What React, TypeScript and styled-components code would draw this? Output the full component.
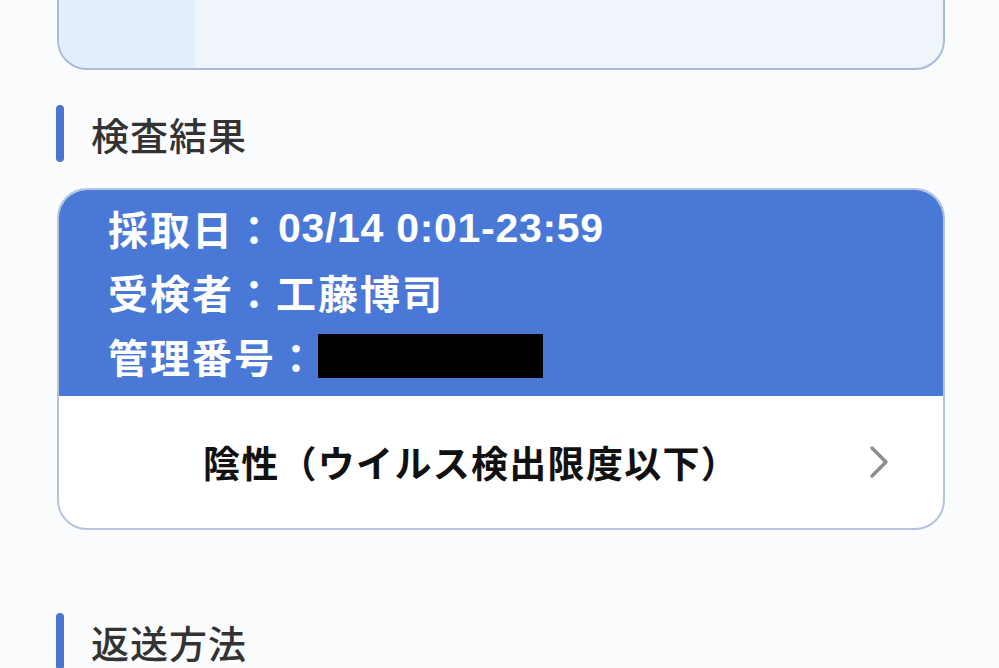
import React from 'react';
import styled, { createGlobalStyle } from 'styled-components';

const GlobalStyle = createGlobalStyle`
  html, body {
    margin: 0;
    padding: 0;
    background: #fbfcfd;
    overflow: hidden;
  }
  body {
    font-family: "Noto Sans CJK JP", "Noto Sans", sans-serif;
  }
`;

const Page = styled.div`
  width: 999px;
  height: 668px;
  overflow: hidden;
  padding: 0 54px 0 57px;
  box-sizing: border-box;
`;

const TopCard = styled.div`
  display: flex;
  height: 142px;
  margin-top: -72px;
  border: 2px solid #a9bad5;
  border-radius: 30px;
  overflow: hidden;
  background: #f0f5fc;
  box-sizing: border-box;
`;

const TopCardSide = styled.div`
  width: 136px;
  background: #e3eefb;
`;

const SectionHeading = styled.h2<{ $top: number }>`
  display: flex;
  align-items: center;
  gap: 27px;
  margin: ${(p) => p.$top}px 0 0 -1px;
  height: 57px;
  font-size: 38px;
  font-weight: 500;
  color: #333;
  letter-spacing: 1px;

  &::before {
    content: '';
    display: block;
    width: 8px;
    height: 57px;
    border-radius: 4px;
    background: #4a76cf;
  }
`;

const ResultCard = styled.div`
  margin-top: 26px;
  border: 2px solid #b4c4de;
  border-radius: 30px;
  overflow: hidden;
  background: #fff;
`;

const ResultHeader = styled.div`
  background: #4a78d7;
  padding: 6px 0 8px 49px;
  color: #fff;
  font-weight: 700;
`;

const InfoLine = styled.div`
  display: flex;
  align-items: center;
  height: 64px;
  font-size: 40px;
`;

const Jp = styled.span`
  letter-spacing: 2px;
`;

const Num = styled.span`
  font-family: "Liberation Sans", Arial, sans-serif;
  font-size: 41px;
  letter-spacing: 0.7px;
  margin-left: 2px;
`;

const Redacted = styled.span`
  display: inline-block;
  width: 225px;
  height: 44px;
  background: #000;
`;

const ResultRow = styled.div`
  display: flex;
  align-items: center;
  height: 132px;
  padding: 0 52px 0 0;
`;

const ResultText = styled.div`
  flex: 1;
  text-align: center;
  font-size: 37px;
  font-weight: 700;
  letter-spacing: 1.3px;
  color: #111;
  padding-left: 14px;
`;

const Chevron = styled.svg`
  width: 22px;
  height: 34px;
  flex-shrink: 0;
`;

export default function App() {
  return (
    <>
      <GlobalStyle />
      <Page>
        <TopCard>
          <TopCardSide />
        </TopCard>

        <SectionHeading $top={35}>検査結果</SectionHeading>

        <ResultCard>
          <ResultHeader>
            <InfoLine>
              <Jp>採取日：</Jp>
              <Num>03/14 0:01-23:59</Num>
            </InfoLine>
            <InfoLine>
              <Jp>受検者：工藤博司</Jp>
            </InfoLine>
            <InfoLine>
              <Jp>管理番号：</Jp>
              <Redacted />
            </InfoLine>
          </ResultHeader>
          <ResultRow>
            <ResultText>陰性（ウイルス検出限度以下）</ResultText>
            <Chevron viewBox="0 0 22 34">
              <path d="M3 3 L17 17 L3 31" fill="none" stroke="#8e8e8e" strokeWidth="3.5" strokeLinecap="round" strokeLinejoin="round" />
            </Chevron>
          </ResultRow>
        </ResultCard>

        <SectionHeading $top={83}>返送方法</SectionHeading>
      </Page>
    </>
  );
}
